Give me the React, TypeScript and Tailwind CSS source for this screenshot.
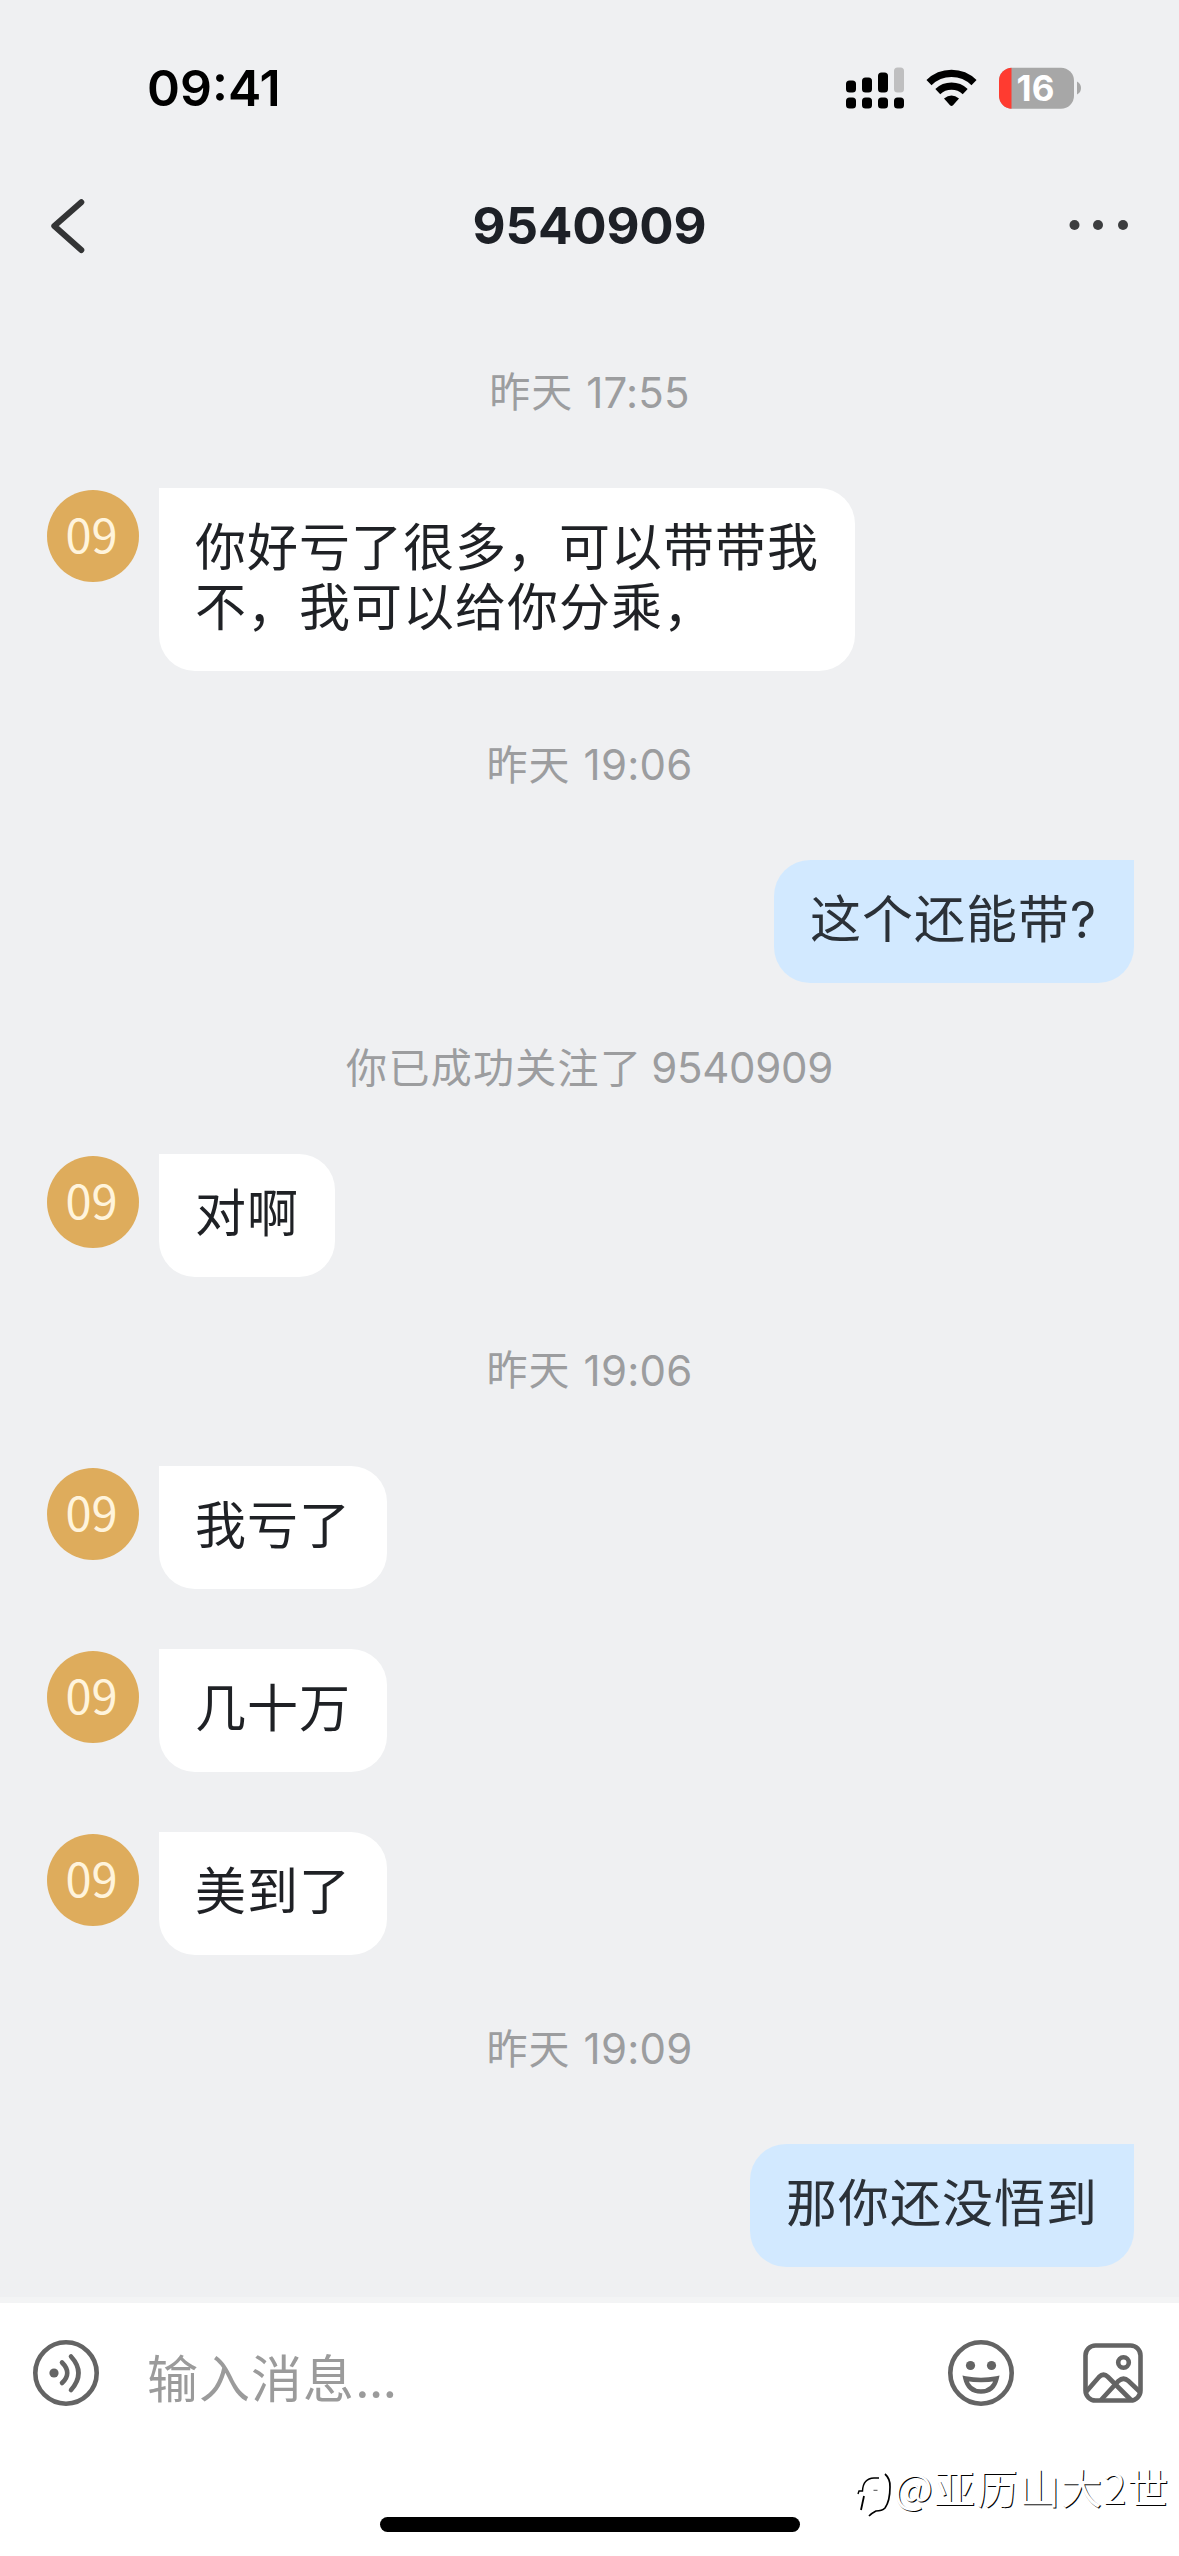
import React from "react";

const FONT = "font-['Inter','Noto_Sans_CJK_SC',sans-serif]";

function StatusBar() {
  return (
    <div className="flex h-[140px] items-center justify-between pl-[147px] pr-[97px] pt-[36px]">
      <span className="text-[50px] font-semibold leading-none tracking-[0px] text-black">09:41</span>
      <svg className="h-[42px] w-[236px]" viewBox="0 0 236 42">
        <g fill="#000">
          <rect x="0" y="13.5" width="10" height="12" rx="3.5" />
          <rect x="16" y="10.5" width="10" height="15" rx="3.5" />
          <rect x="32" y="5.5" width="10" height="20" rx="3.5" />
          <rect x="0" y="30.5" width="10" height="11" rx="3.5" />
          <rect x="16" y="30.5" width="10" height="11" rx="3.5" />
          <rect x="32" y="30.5" width="10" height="11" rx="3.5" />
          <rect x="48" y="30.5" width="10" height="11" rx="3.5" />
        </g>
        <rect x="48" y="0.5" width="10" height="25" rx="3.5" fill="#bfbfc0" />
        <g fill="none" stroke="#000" strokeWidth="7.2">
          <path d="M83 15.6 A32 32 0 0 1 128 15.6" />
          <path d="M91.8 24.6 A20 20 0 0 1 119.2 24.6" />
        </g>
        <path d="M98 31.6 Q105.500 25.600 113 31.600 L107 38.300 Q105.500 39.800 104 38.300 Z" fill="#000" />
        <clipPath id="cell"><rect x="153" y="0.700" width="75" height="41" rx="13" /></clipPath>
        <g clipPath="url(#cell)">
          <rect x="153" y="0" width="75" height="42" fill="#a7a7a7" />
          <rect x="153" y="0" width="12.500" height="42" fill="#ff3b30" />
        </g>
        <path d="M231 14.500 Q235 16.500 235 21 Q235 25.500 231 27.500 Z" fill="#a7a7a7" />
        <text x="189.500" y="33.500" textAnchor="middle" fill="#fff" className="text-[35px] font-bold">16</text>
      </svg>
    </div>
  );
}

function TitleBar() {
  return (
    <div className="flex h-[158.700px] items-start justify-between pl-[50px] pr-[50px] pt-[58px]">
      <svg className="h-[56px] w-[60px]" viewBox="0 0 60 56" fill="none" stroke="#333435" strokeWidth="6" strokeLinecap="round" strokeLinejoin="round">
        <path d="M31.300 4.200 L4.300 28 L31.300 52" />
      </svg>
      <h1 className="pt-[2px] text-[51px] font-bold leading-[52px] tracking-[-0.2px] text-[#1d2026]">9540909</h1>
      <svg className="h-[56px] w-[60px]" viewBox="0 0 60 56" fill="#3c3d3f">
        <circle cx="5.500" cy="27" r="5" />
        <circle cx="29" cy="27" r="5" />
        <circle cx="54" cy="27" r="5" />
      </svg>
    </div>
  );
}

function Stamp({ day, time }: { day: string; time: string }) {
  return (
    <div className="flex h-[189.300px] items-center justify-center gap-[13px] pb-[1px] text-[#9c9d9f]">
      <span className="text-[41px] leading-none tracking-[1px]">{day}</span>
      <span className="text-[42px] leading-none tracking-[0.2px]">{time}</span>
    </div>
  );
}

function Notice({ label, name }: { label: string; name: string }) {
  return (
    <div className="flex h-[170.500px] items-center justify-center gap-[9px] pb-[1px] text-[#9c9d9f]">
      <span className="text-[41px] leading-none tracking-[1.300px]">{label}</span>
      <span className="text-[42px] leading-none tracking-[-0.3px]">{name}</span>
    </div>
  );
}

function Incoming({ lines }: { lines: string[] }) {
  return (
    <div className="flex items-start pl-[47px]">
      <div className="mt-[2px] flex h-[92px] w-[92px] items-center justify-center rounded-full bg-[#deac5c] pb-[7px] pr-[3px] font-['Noto_Sans_CJK_SC',sans-serif] text-[47px] leading-none text-[#fff4dc]">
        <span>09</span>
      </div>
      <div className="ml-[20px] rounded-[36px] rounded-tl-none bg-white pb-[33px] pl-[36px] pr-[36px] pt-[30px] text-[51px] leading-[60px] tracking-[1px] text-[#1f2125]">
        {lines.map((line) => (
          <div key={line} className="whitespace-nowrap">{line}</div>
        ))}
      </div>
    </div>
  );
}

function Outgoing({ width, children }: { width: string; children: React.ReactNode }) {
  return (
    <div className="flex justify-end pr-[45px]">
      <div className={`rounded-[36px] rounded-tr-none bg-[#d2e9ff] pb-[33px] pl-[36px] pt-[30px] text-[51px] leading-[60px] tracking-[1px] text-[#2b3138] ${width}`}>
        {children}
      </div>
    </div>
  );
}

function InputBar() {
  return (
    <footer className="flex h-[259px] flex-col border-t-[6px] border-[#f3f4f5] bg-white">
      <div className="flex h-[140px] items-center">
        <svg className="ml-[32px] h-[68px] w-[68px]" viewBox="0 0 68 68" fill="none" stroke="#646464" strokeWidth="4.600" strokeLinecap="round">
          <circle cx="34" cy="34" r="30.700" />
          <circle cx="22" cy="34" r="4.600" fill="#646464" stroke="none" />
          <path d="M30 23.500 Q40.500 34 30 44" />
          <path d="M39 17.500 Q54 34 39 51" />
        </svg>
        <span className="ml-[47px] mt-[14px] flex-1 text-[51px] leading-[60px] tracking-[1px] text-[#9b9b9b]">
          输入消息<span className="tracking-[-1px]">...</span>
        </span>
        <svg className="h-[68px] w-[68px]" viewBox="0 0 68 68" fill="none" stroke="#646464" strokeWidth="4.600">
          <circle cx="34" cy="34" r="30.700" />
          <circle cx="23.500" cy="26.500" r="4.600" fill="#646464" stroke="none" />
          <circle cx="44.500" cy="26.500" r="4.600" fill="#646464" stroke="none" />
          <path d="M18.500 39.500 Q34 42.500 49.500 39.500 Q46.500 52.500 34 52.500 Q21.500 52.500 18.500 39.500 Z" />
        </svg>
        <svg className="ml-[66px] mr-[34px] h-[64px] w-[64px]" viewBox="0 0 64 64" fill="none" stroke="#646464" strokeWidth="4.600">
          <rect x="4.500" y="4.500" width="55" height="55" rx="10" />
          <circle cx="42.500" cy="21.500" r="5.300" />
          <path d="M5 51 L18 36 Q22.500 31.500 27 36 L50 59" />
          <path d="M20 59 L37.500 40 Q42.500 35.500 47.500 40 L59 51" />
        </svg>
      </div>
      <div className="flex items-start">
        <div className="ml-[380px] mt-[74px] h-[15px] w-[420px] rounded-full bg-black" />
        <div className="ml-[56px] mt-[19px] flex items-start">
          <svg className="mt-[5px] h-[52px] w-[38px]" viewBox="0 0 38 52" fill="none" stroke="#000" strokeWidth="1.400">
            <path d="M2 27 L3 24 H6.500 Q7 11.500 18 11 H23" />
            <path d="M8 29 L5 43" strokeWidth="1.800" />
            <path d="M17.500 23.300 H21.500" strokeWidth="0.700" />
            <path d="M29 7 Q34.500 12 34 20 Q34 34 29 41 Q26 44 20 44 Q16 46 13 49" strokeWidth="1.700" />
          </svg>
          <span className="-mt-[4px] whitespace-nowrap font-['Noto_Sans_CJK_SC',sans-serif] text-[41px] leading-[56px] tracking-[1.300px] text-white [text-shadow:1px_1px_0_#000]">@亚历山大2世</span>
        </div>
      </div>
    </footer>
  );
}

export default function App() {
  return (
    <div className={`flex h-[2556px] w-[1179px] flex-col overflow-hidden bg-[#eff0f2] ${FONT}`}>
      <StatusBar />
      <TitleBar />
      <main className="flex min-h-0 flex-1 flex-col">
        <Stamp day="昨天" time="17:55" />
        <Incoming lines={["你好亏了很多，可以带带我", "不，我可以给你分乘，"]} />
        <Stamp day="昨天" time="19:06" />
        <Outgoing width="w-[360px]">这个还能带?</Outgoing>
        <Notice label="你已成功关注了" name="9540909" />
        <Incoming lines={["对啊"]} />
        <Stamp day="昨天" time="19:06" />
        <div className="flex flex-col gap-[60px]">
          <Incoming lines={["我亏了"]} />
          <Incoming lines={["几十万"]} />
          <Incoming lines={["美到了"]} />
        </div>
        <Stamp day="昨天" time="19:09" />
        <Outgoing width="w-[384px]">那你还没悟到</Outgoing>
      </main>
      <InputBar />
    </div>
  );
}
